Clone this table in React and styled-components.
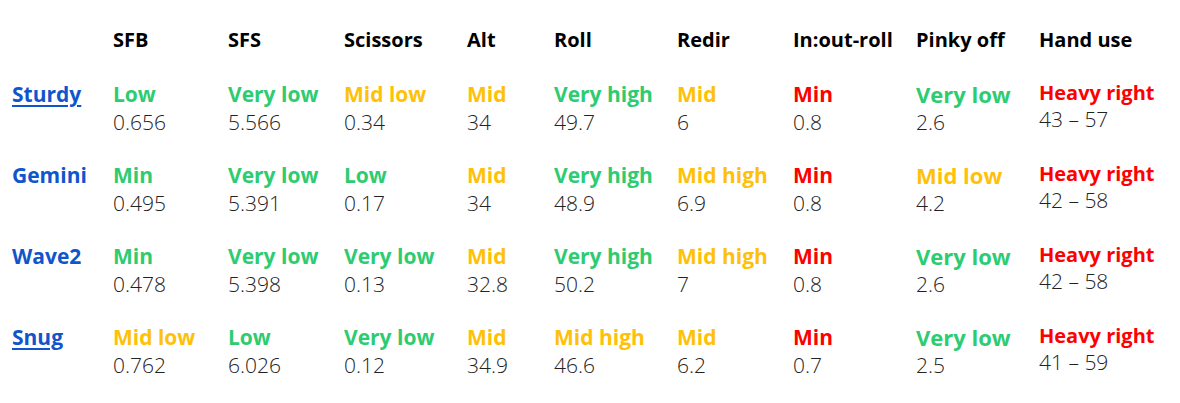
import React from "react";
import styled, { createGlobalStyle } from "styled-components";

const Global = createGlobalStyle`
  html, body { margin: 0; padding: 0; background: #fff; }
  body { font-family: "Open Sans", "Liberation Sans", sans-serif; }
`;

const COLS = "101px 115px 116px 123px 87px 123px 116px 123px 123px 1fr";

const Table = styled.div`
  display: grid;
  grid-template-columns: ${COLS};
  row-gap: 25px;
  padding: 26px 0 0 12px;
`;

const Head = styled.div`
  font-size: 20px;
  line-height: 28px;
  font-weight: 700;
  color: #000;
  white-space: nowrap;
  padding-bottom: 1px;
`;

const Name = styled.a`
  font-size: 21px;
  line-height: 28px;
  font-weight: 700;
  color: #1155cc;
  text-decoration: ${(p) => (p.$link ? "underline" : "none")};
  text-decoration-thickness: 2px;
  text-underline-offset: 3px;
  align-self: start;
  justify-self: start;
`;

const Cell = styled.div`
  display: flex;
  flex-direction: column;
  white-space: nowrap;
`;

const Label = styled.span`
  font-size: ${(p) => p.$size}px;
  line-height: ${(p) => p.$lh}px;
  font-weight: 700;
  color: ${(p) => p.$color};
`;

const Value = styled.span`
  font-size: 21px;
  line-height: 28px;
  font-weight: 300;
  color: #222;
`;

const C = { g: "#2ecc71", y: "#ffc107", r: "#ff0000" };

const headers = ["SFB", "SFS", "Scissors", "Alt", "Roll", "Redir", "In:out-roll", "Pinky off", "Hand use"];
const sizes = [21, 21, 21, 21, 21, 21, 21, 22, 20];
const lhs = [28, 28, 28, 28, 28, 28, 28, 28, 25];

const rows = [
  {
    name: "Sturdy",
    link: true,
    cells: [
      ["Low", "g", "0.656"],
      ["Very low", "g", "5.566"],
      ["Mid low", "y", "0.34"],
      ["Mid", "y", "34"],
      ["Very high", "g", "49.7"],
      ["Mid", "y", "6"],
      ["Min", "r", "0.8"],
      ["Very low", "g", "2.6"],
      ["Heavy right", "r", "43 – 57"],
    ],
  },
  {
    name: "Gemini",
    link: false,
    cells: [
      ["Min", "g", "0.495"],
      ["Very low", "g", "5.391"],
      ["Low", "g", "0.17"],
      ["Mid", "y", "34"],
      ["Very high", "g", "48.9"],
      ["Mid high", "y", "6.9"],
      ["Min", "r", "0.8"],
      ["Mid low", "y", "4.2"],
      ["Heavy right", "r", "42 – 58"],
    ],
  },
  {
    name: "Wave2",
    link: false,
    cells: [
      ["Min", "g", "0.478"],
      ["Very low", "g", "5.398"],
      ["Very low", "g", "0.13"],
      ["Mid", "y", "32.8"],
      ["Very high", "g", "50.2"],
      ["Mid high", "y", "7"],
      ["Min", "r", "0.8"],
      ["Very low", "g", "2.6"],
      ["Heavy right", "r", "42 – 58"],
    ],
  },
  {
    name: "Snug",
    link: true,
    cells: [
      ["Mid low", "y", "0.762"],
      ["Low", "g", "6.026"],
      ["Very low", "g", "0.12"],
      ["Mid", "y", "34.9"],
      ["Mid high", "y", "46.6"],
      ["Mid", "y", "6.2"],
      ["Min", "r", "0.7"],
      ["Very low", "g", "2.5"],
      ["Heavy right", "r", "41 – 59"],
    ],
  },
];

export default function App() {
  return (
    <>
      <Global />
      <Table>
        <div />
        {headers.map((h) => (
          <Head key={h}>{h}</Head>
        ))}
        {rows.map((r) => (
          <React.Fragment key={r.name}>
            <Name $link={r.link} href="#">{r.name}</Name>
            {r.cells.map(([label, c, v], i) => (
              <Cell key={i}>
                <Label $color={C[c]} $size={sizes[i]} $lh={lhs[i]}>{label}</Label>
                <Value>{v}</Value>
              </Cell>
            ))}
          </React.Fragment>
        ))}
      </Table>
    </>
  );
}
